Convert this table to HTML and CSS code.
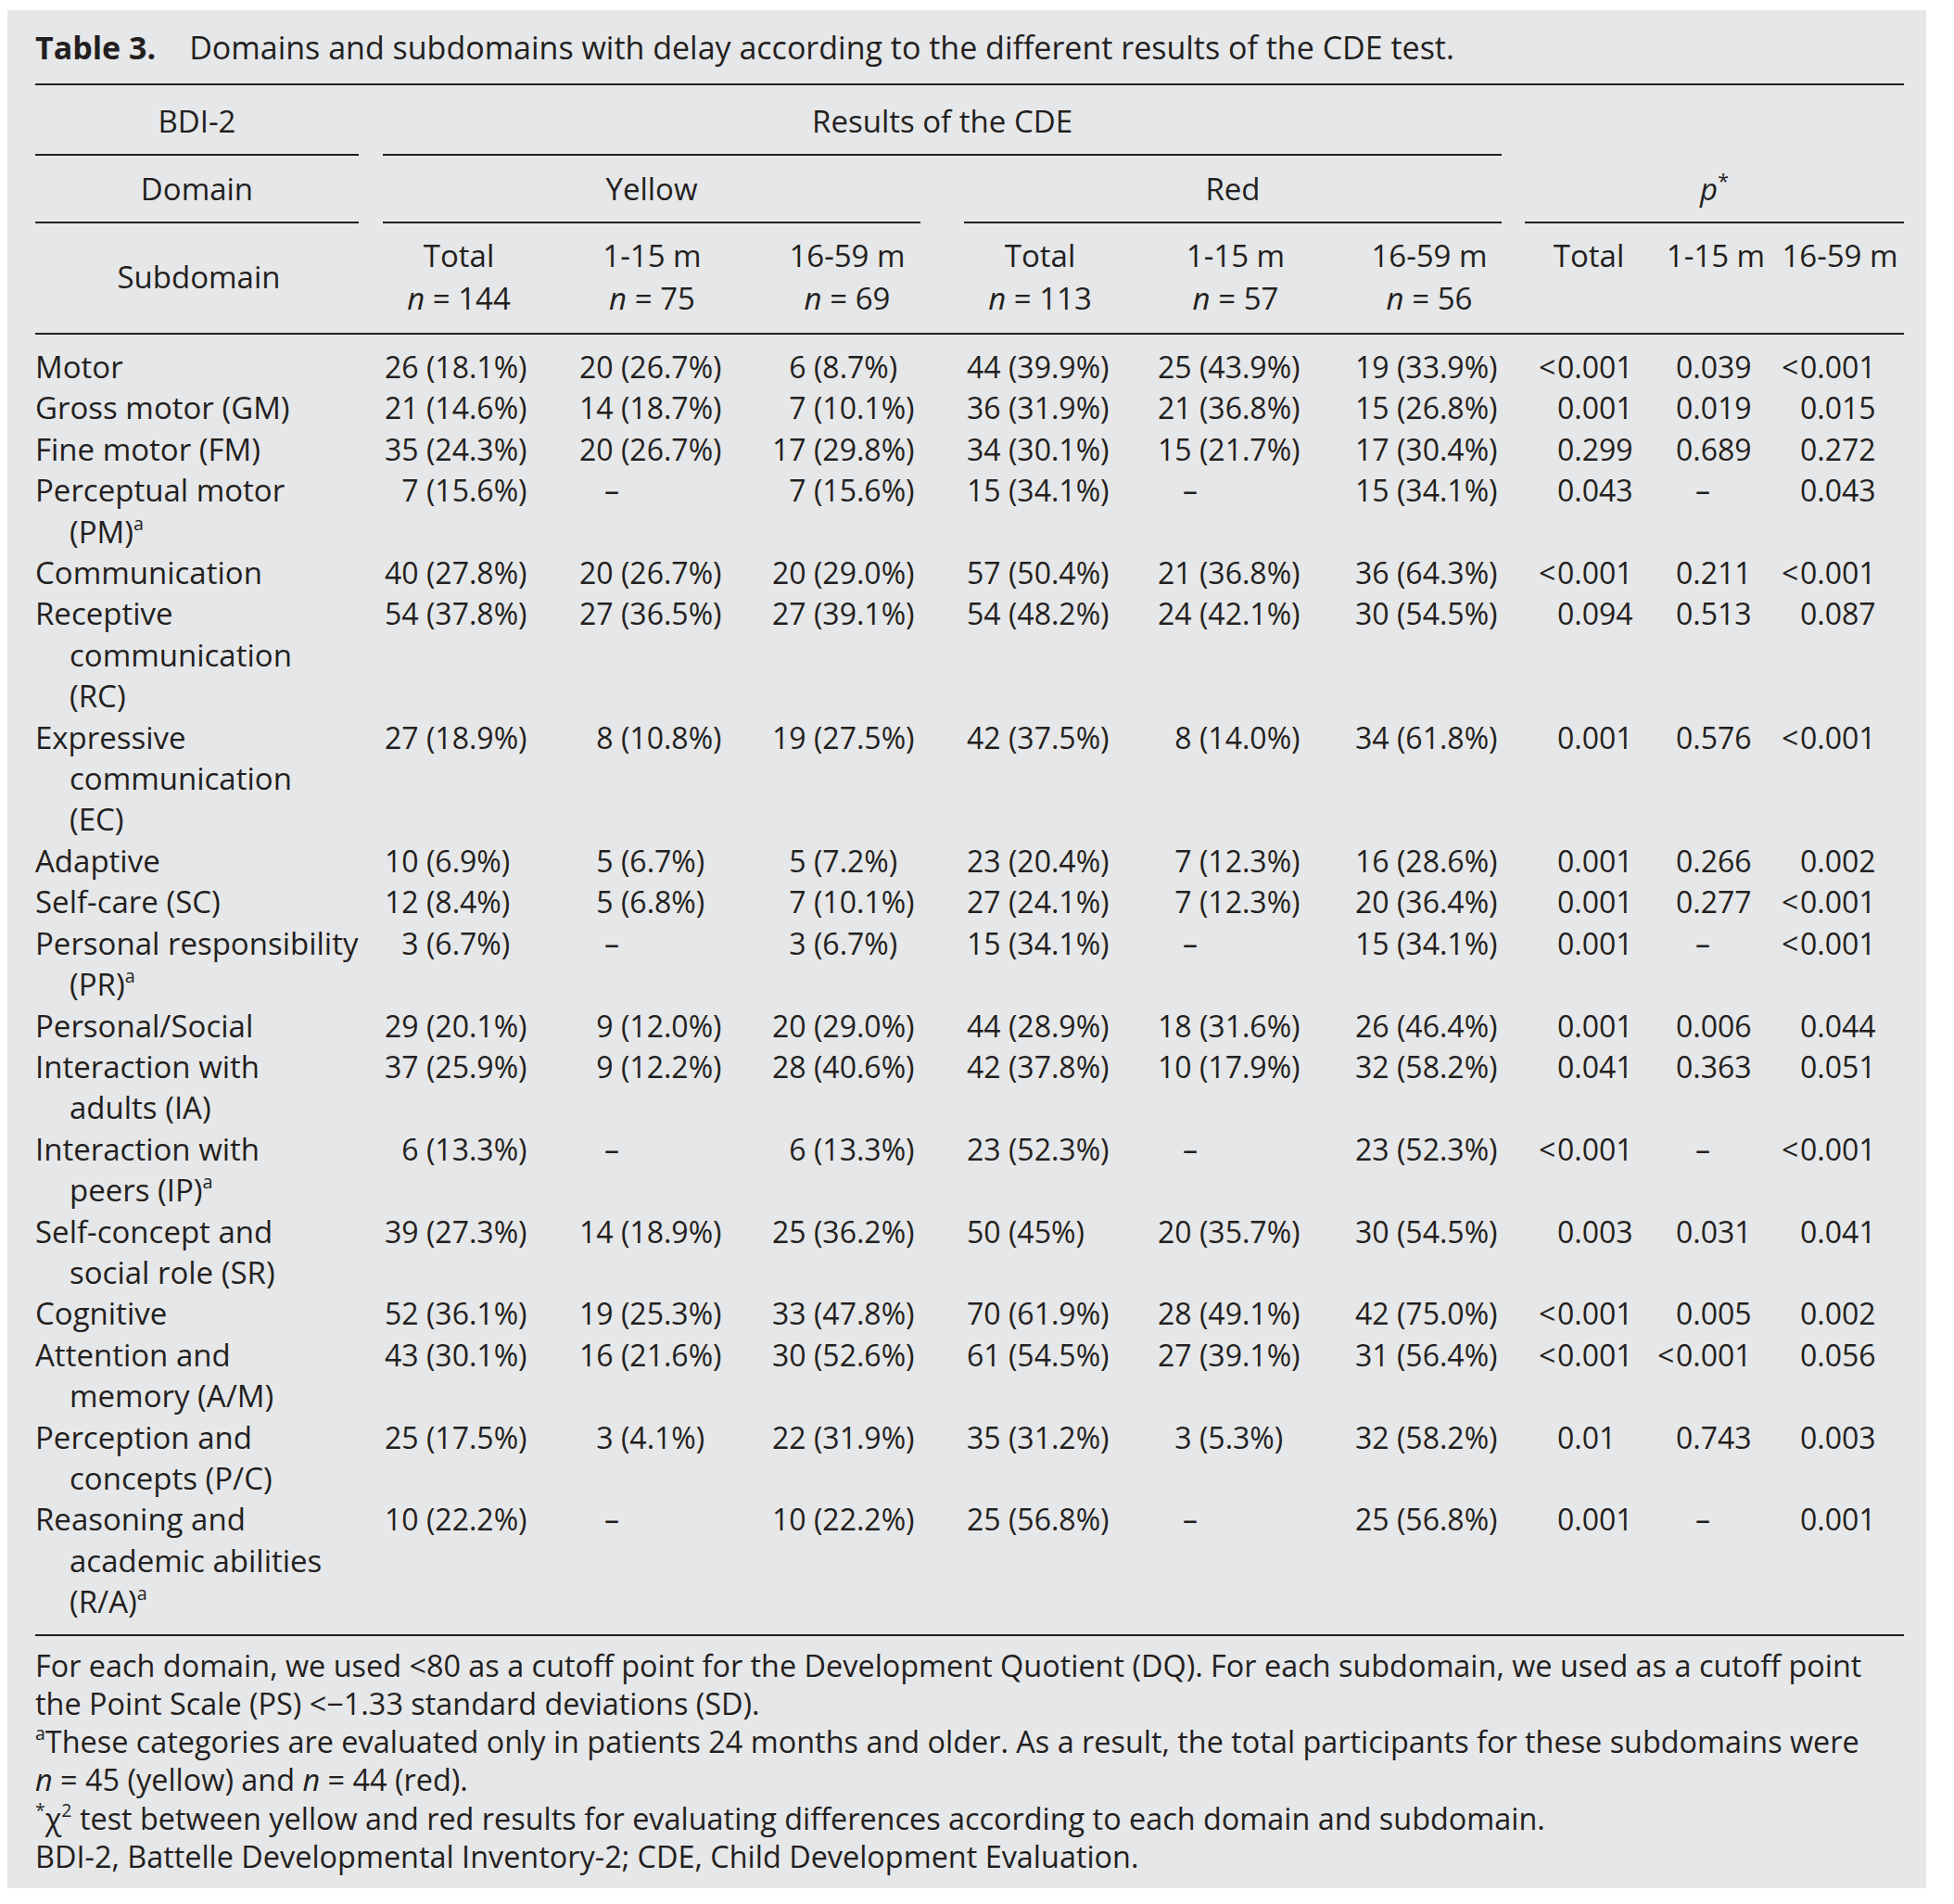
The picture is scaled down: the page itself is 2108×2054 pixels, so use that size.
FILE: index.html
```html
<!DOCTYPE html>
<html lang="en">
<head>
<meta charset="utf-8">
<title>Table 3</title>
<link rel="stylesheet" href="styles.css">
</head>
<body>
<div class="panel">
  <div class="caption"><b class="tno">Table 3.</b>Domains and subdomains with delay according to the different results of the CDE test.</div>

  <div class="cols thead">
    <div class="h1 hb c-lab">BDI-2</div>
    <div class="h1 hb c-res">Results of the CDE</div>
    <div class="h1 c-pblank"></div>

    <div class="h2 hb c-lab">Domain</div>
    <div class="h2 hb c-yel">Yellow</div>
    <div class="h2 hb c-red">Red</div>
    <div class="h2 hb c-p"><i>p</i><sup class="ast">*</sup></div>

    <div class="h3 sub">Subdomain</div>
    <div class="h3">Total<br><i>n</i> = 144</div>
    <div class="h3">1-15 m<br><i>n</i> = 75</div>
    <div class="h3">16-59 m<br><i>n</i> = 69</div>
    <div class="h3">Total<br><i>n</i> = 113</div>
    <div class="h3">1-15 m<br><i>n</i> = 57</div>
    <div class="h3">16-59 m<br><i>n</i> = 56</div>
    <div class="h3">Total</div>
    <div class="h3">1-15 m</div>
    <div class="h3">16-59 m</div>
  </div>

  <div class="cols tbody">
    <div class="lab">Motor</div>
    <div class="k1">26 (18.1%)</div><div class="k2">20 (26.7%)</div><div class="k3"><span class="fs"></span>6 (8.7%)</div>
    <div class="k4">44 (39.9%)</div><div class="k5">25 (43.9%)</div><div class="k6">19 (33.9%)</div>
    <div class="q1"><span class="lt">&lt;</span>0.001</div><div class="q2"><span class="lt"></span>0.039</div><div class="q3"><span class="lt">&lt;</span>0.001</div>

    <div class="lab">Gross motor (GM)</div>
    <div class="k1">21 (14.6%)</div><div class="k2">14 (18.7%)</div><div class="k3"><span class="fs"></span>7 (10.1%)</div>
    <div class="k4">36 (31.9%)</div><div class="k5">21 (36.8%)</div><div class="k6">15 (26.8%)</div>
    <div class="q1"><span class="lt"></span>0.001</div><div class="q2"><span class="lt"></span>0.019</div><div class="q3"><span class="lt"></span>0.015</div>

    <div class="lab">Fine motor (FM)</div>
    <div class="k1">35 (24.3%)</div><div class="k2">20 (26.7%)</div><div class="k3">17 (29.8%)</div>
    <div class="k4">34 (30.1%)</div><div class="k5">15 (21.7%)</div><div class="k6">17 (30.4%)</div>
    <div class="q1"><span class="lt"></span>0.299</div><div class="q2"><span class="lt"></span>0.689</div><div class="q3"><span class="lt"></span>0.272</div>

    <div class="lab">Perceptual motor<br>(PM)<sup class="fn">a</sup></div>
    <div class="k1"><span class="fs"></span>7 (15.6%)</div><div class="k2"><span class="dash">&#8211;</span></div><div class="k3"><span class="fs"></span>7 (15.6%)</div>
    <div class="k4">15 (34.1%)</div><div class="k5"><span class="dash">&#8211;</span></div><div class="k6">15 (34.1%)</div>
    <div class="q1"><span class="lt"></span>0.043</div><div class="q2"><span class="dash dq">&#8211;</span></div><div class="q3"><span class="lt"></span>0.043</div>

    <div class="lab">Communication</div>
    <div class="k1">40 (27.8%)</div><div class="k2">20 (26.7%)</div><div class="k3">20 (29.0%)</div>
    <div class="k4">57 (50.4%)</div><div class="k5">21 (36.8%)</div><div class="k6">36 (64.3%)</div>
    <div class="q1"><span class="lt">&lt;</span>0.001</div><div class="q2"><span class="lt"></span>0.211</div><div class="q3"><span class="lt">&lt;</span>0.001</div>

    <div class="lab">Receptive<br>communication<br>(RC)</div>
    <div class="k1">54 (37.8%)</div><div class="k2">27 (36.5%)</div><div class="k3">27 (39.1%)</div>
    <div class="k4">54 (48.2%)</div><div class="k5">24 (42.1%)</div><div class="k6">30 (54.5%)</div>
    <div class="q1"><span class="lt"></span>0.094</div><div class="q2"><span class="lt"></span>0.513</div><div class="q3"><span class="lt"></span>0.087</div>

    <div class="lab">Expressive<br>communication<br>(EC)</div>
    <div class="k1">27 (18.9%)</div><div class="k2"><span class="fs"></span>8 (10.8%)</div><div class="k3">19 (27.5%)</div>
    <div class="k4">42 (37.5%)</div><div class="k5"><span class="fs"></span>8 (14.0%)</div><div class="k6">34 (61.8%)</div>
    <div class="q1"><span class="lt"></span>0.001</div><div class="q2"><span class="lt"></span>0.576</div><div class="q3"><span class="lt">&lt;</span>0.001</div>

    <div class="lab">Adaptive</div>
    <div class="k1">10 (6.9%)</div><div class="k2"><span class="fs"></span>5 (6.7%)</div><div class="k3"><span class="fs"></span>5 (7.2%)</div>
    <div class="k4">23 (20.4%)</div><div class="k5"><span class="fs"></span>7 (12.3%)</div><div class="k6">16 (28.6%)</div>
    <div class="q1"><span class="lt"></span>0.001</div><div class="q2"><span class="lt"></span>0.266</div><div class="q3"><span class="lt"></span>0.002</div>

    <div class="lab">Self-care (SC)</div>
    <div class="k1">12 (8.4%)</div><div class="k2"><span class="fs"></span>5 (6.8%)</div><div class="k3"><span class="fs"></span>7 (10.1%)</div>
    <div class="k4">27 (24.1%)</div><div class="k5"><span class="fs"></span>7 (12.3%)</div><div class="k6">20 (36.4%)</div>
    <div class="q1"><span class="lt"></span>0.001</div><div class="q2"><span class="lt"></span>0.277</div><div class="q3"><span class="lt">&lt;</span>0.001</div>

    <div class="lab">Personal responsibility<br>(PR)<sup class="fn">a</sup></div>
    <div class="k1"><span class="fs"></span>3 (6.7%)</div><div class="k2"><span class="dash">&#8211;</span></div><div class="k3"><span class="fs"></span>3 (6.7%)</div>
    <div class="k4">15 (34.1%)</div><div class="k5"><span class="dash">&#8211;</span></div><div class="k6">15 (34.1%)</div>
    <div class="q1"><span class="lt"></span>0.001</div><div class="q2"><span class="dash dq">&#8211;</span></div><div class="q3"><span class="lt">&lt;</span>0.001</div>

    <div class="lab">Personal/Social</div>
    <div class="k1">29 (20.1%)</div><div class="k2"><span class="fs"></span>9 (12.0%)</div><div class="k3">20 (29.0%)</div>
    <div class="k4">44 (28.9%)</div><div class="k5">18 (31.6%)</div><div class="k6">26 (46.4%)</div>
    <div class="q1"><span class="lt"></span>0.001</div><div class="q2"><span class="lt"></span>0.006</div><div class="q3"><span class="lt"></span>0.044</div>

    <div class="lab">Interaction with<br>adults (IA)</div>
    <div class="k1">37 (25.9%)</div><div class="k2"><span class="fs"></span>9 (12.2%)</div><div class="k3">28 (40.6%)</div>
    <div class="k4">42 (37.8%)</div><div class="k5">10 (17.9%)</div><div class="k6">32 (58.2%)</div>
    <div class="q1"><span class="lt"></span>0.041</div><div class="q2"><span class="lt"></span>0.363</div><div class="q3"><span class="lt"></span>0.051</div>

    <div class="lab">Interaction with<br>peers (IP)<sup class="fn">a</sup></div>
    <div class="k1"><span class="fs"></span>6 (13.3%)</div><div class="k2"><span class="dash">&#8211;</span></div><div class="k3"><span class="fs"></span>6 (13.3%)</div>
    <div class="k4">23 (52.3%)</div><div class="k5"><span class="dash">&#8211;</span></div><div class="k6">23 (52.3%)</div>
    <div class="q1"><span class="lt">&lt;</span>0.001</div><div class="q2"><span class="dash dq">&#8211;</span></div><div class="q3"><span class="lt">&lt;</span>0.001</div>

    <div class="lab">Self-concept and<br>social role (SR)</div>
    <div class="k1">39 (27.3%)</div><div class="k2">14 (18.9%)</div><div class="k3">25 (36.2%)</div>
    <div class="k4">50 (45%)</div><div class="k5">20 (35.7%)</div><div class="k6">30 (54.5%)</div>
    <div class="q1"><span class="lt"></span>0.003</div><div class="q2"><span class="lt"></span>0.031</div><div class="q3"><span class="lt"></span>0.041</div>

    <div class="lab">Cognitive</div>
    <div class="k1">52 (36.1%)</div><div class="k2">19 (25.3%)</div><div class="k3">33 (47.8%)</div>
    <div class="k4">70 (61.9%)</div><div class="k5">28 (49.1%)</div><div class="k6">42 (75.0%)</div>
    <div class="q1"><span class="lt">&lt;</span>0.001</div><div class="q2"><span class="lt"></span>0.005</div><div class="q3"><span class="lt"></span>0.002</div>

    <div class="lab">Attention and<br>memory (A/M)</div>
    <div class="k1">43 (30.1%)</div><div class="k2">16 (21.6%)</div><div class="k3">30 (52.6%)</div>
    <div class="k4">61 (54.5%)</div><div class="k5">27 (39.1%)</div><div class="k6">31 (56.4%)</div>
    <div class="q1"><span class="lt">&lt;</span>0.001</div><div class="q2"><span class="lt">&lt;</span>0.001</div><div class="q3"><span class="lt"></span>0.056</div>

    <div class="lab">Perception and<br>concepts (P/C)</div>
    <div class="k1">25 (17.5%)</div><div class="k2"><span class="fs"></span>3 (4.1%)</div><div class="k3">22 (31.9%)</div>
    <div class="k4">35 (31.2%)</div><div class="k5"><span class="fs"></span>3 (5.3%)</div><div class="k6">32 (58.2%)</div>
    <div class="q1"><span class="lt"></span>0.01</div><div class="q2"><span class="lt"></span>0.743</div><div class="q3"><span class="lt"></span>0.003</div>

    <div class="lab">Reasoning and<br>academic abilities<br>(R/A)<sup class="fn">a</sup></div>
    <div class="k1">10 (22.2%)</div><div class="k2"><span class="dash">&#8211;</span></div><div class="k3">10 (22.2%)</div>
    <div class="k4">25 (56.8%)</div><div class="k5"><span class="dash">&#8211;</span></div><div class="k6">25 (56.8%)</div>
    <div class="q1"><span class="lt"></span>0.001</div><div class="q2"><span class="dash dq">&#8211;</span></div><div class="q3"><span class="lt"></span>0.001</div>
  </div>

  <div class="notes">
    <p>For each domain, we used &lt;80 as a cutoff point for the Development Quotient (DQ). For each subdomain, we used as a cutoff point<br>the Point Scale (PS) &lt;&#8722;1.33 standard deviations (SD).</p>
    <p><sup class="fn">a</sup>These categories are evaluated only in patients 24 months and older. As a result, the total participants for these subdomains were<br><i>n</i> = 45 (yellow) and <i>n</i> = 44 (red).</p>
    <p><sup class="fn">*</sup>&#967;<sup class="fn">2</sup> test between yellow and red results for evaluating differences according to each domain and subdomain.</p>
    <p>BDI-2, Battelle Developmental Inventory-2; CDE, Child Development Evaluation.</p>
  </div>
</div>
</body>
</html>
```

FILE: styles.css
```css
* {
  box-sizing: border-box;
}

body {
  margin: 0;
  background: #ffffff;
  color: #231f20;
  font-family: "Open Sans", "Liberation Sans", Arial, sans-serif;
}

.panel {
  width: 2070px;
  margin: 11px 0 0 8px;
  padding: 18px 24px 14px 30px;
  background: #e6e7e9;
}

.caption {
  font-size: 34px;
  line-height: 44px;
  margin-bottom: 17px;
  white-space: nowrap;
}

.tno {
  font-weight: bold;
  margin-right: 36px;
}

.cols {
  display: grid;
  grid-template-columns: 353px 208px 209px 212px 204px 218px 200px 144px 130px 138px;
  font-size: 32px;
}

/* header */
.thead {
  border-top: 2px solid #231f20;
  text-align: center;
  font-size: 33px;
}

.hb {
  border-bottom: 2px solid #231f20;
}

.h1 {
  padding: 17px 0 13px;
  line-height: 44px;
}

.h2 {
  padding: 14px 0 13px;
  line-height: 44px;
}

.h3 {
  padding: 12px 0 14px;
  line-height: 46px;
  border-bottom: 2px solid #231f20;
  white-space: nowrap;
}

.c-lab {
  grid-column: 1;
  margin-right: 4px;
}

.c-res {
  grid-column: 2 / 8;
  margin: 0 22px;
}

.c-pblank {
  grid-column: 8 / 11;
}

.c-yel {
  grid-column: 2 / 5;
  margin: 0 27px 0 22px;
}

.c-red {
  grid-column: 5 / 8;
  margin: 0 22px 0 20px;
}

.c-p {
  grid-column: 8 / 11;
  margin-left: 3px;
}

.ast {
  font-size: 0.65em;
  line-height: 0;
  vertical-align: 0.6em;
}

.sub {
  display: flex;
  align-items: center;
  justify-content: center;
}

/* body */
.tbody {
  padding: 13px 0 12px;
  border-bottom: 2px solid #231f20;
  line-height: 44.4px;
  white-space: nowrap;
}

.lab {
  padding-left: 37px;
  text-indent: -37px;
  font-size: 33px;
}

.k1 { padding-left: 24px; }
.k2 { padding-left: 26px; }
.k3 { padding-left: 25px; }
.k4 { padding-left: 23px; }
.k5 { padding-left: 25px; }
.k6 { padding-left: 20px; }
.q1 { padding-left: 18px; }
.q2 { padding-left: 2px; }
.q3 { padding-left: 6px; }

.fs {
  display: inline-block;
  width: 0.572em;
}

.lt {
  display: inline-block;
  width: 20px;
}

.dash {
  display: inline-block;
  margin-left: 27px;
}

.dash.dq {
  margin-left: 41px;
}

.fn {
  font-size: 0.6em;
  line-height: 0;
  vertical-align: 0.7em;
}

/* notes */
.notes {
  padding-top: 11px;
  font-size: 32.4px;
  line-height: 41.3px;
  white-space: nowrap;
}

.notes p {
  margin: 0;
}
```
